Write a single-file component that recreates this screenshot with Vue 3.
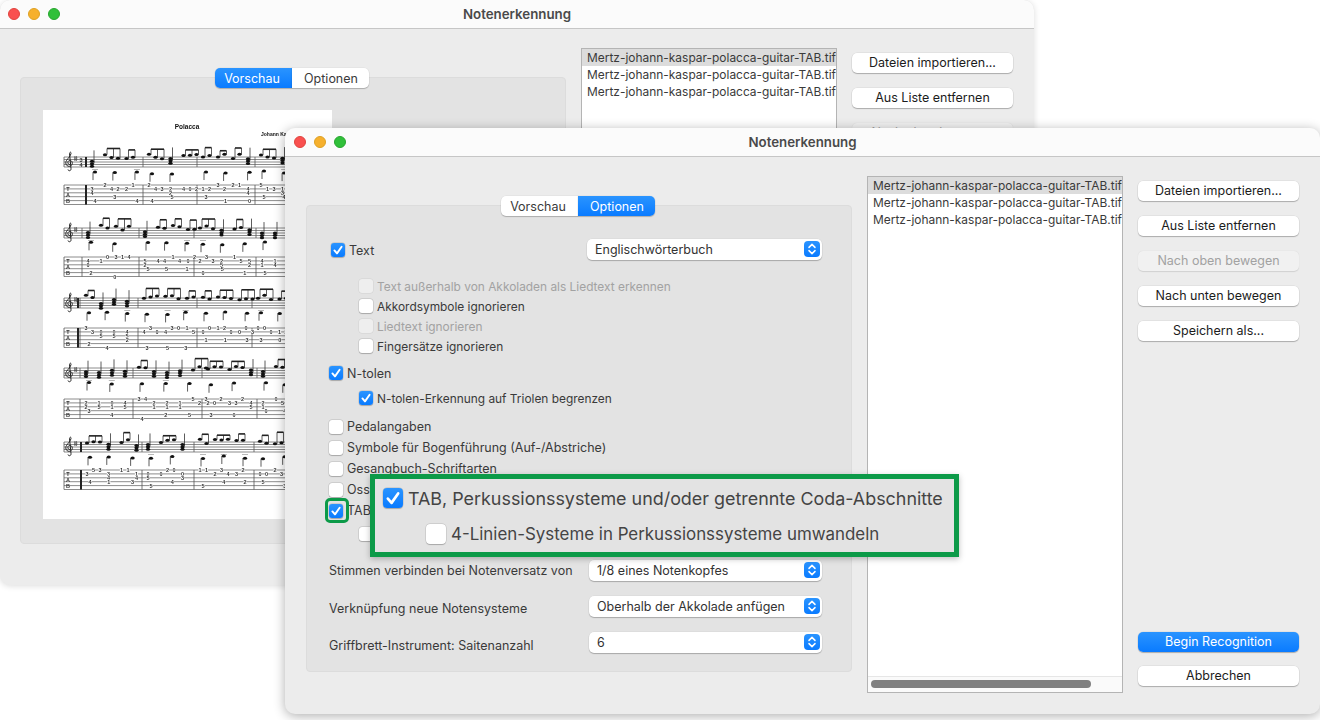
<script setup>
const files = ['Mertz-johann-kaspar-polacca-guitar-TAB.tif', 'Mertz-johann-kaspar-polacca-guitar-TAB.tif', 'Mertz-johann-kaspar-polacca-guitar-TAB.tif']
const buttons = [
  { t: 'Dateien importieren...' },
  { t: 'Aus Liste entfernen' },
  { t: 'Nach oben bewegen', off: true },
  { t: 'Nach unten bewegen' },
  { t: 'Speichern als...' }
]
const backButtons = buttons.slice(0, 3)
const textRows = [
  { t: 'Text außerhalb von Akkoladen als Liedtext erkennen', off: true },
  { t: 'Akkordsymbole ignorieren' },
  { t: 'Liedtext ignorieren', off: true },
  { t: 'Fingersätze ignorieren' }
]
const mainRows = [
  { t: 'Pedalangaben' },
  { t: 'Symbole für Bogenführung (Auf-/Abstriche)' },
  { t: 'Gesangbuch-Schriftarten' },
  { t: 'Ossia-Takte' },
  { t: 'TAB, Perkussionssysteme und/oder getrennte Coda-Abschnitte', on: true }
]

/* sheet music, drawn on the page's own coordinates */
const systems = [
  { staff: 157, tab: 185, bars: [86, 143, 197, 255, 290], thick: 86, sig: true },
  { staff: 228, tab: 257, bars: [82, 139, 194, 256, 290] },
  { staff: 298, tab: 328, bars: [80, 138, 197, 252, 290], thick: 78 },
  { staff: 368, tab: 399, bars: [80, 133, 202, 257, 290] },
  { staff: 442, tab: 470, bars: [81, 142, 194, 254, 290], thick: 81 }
]
let seed = 4711
const rnd = () => (seed = (seed * 16807) % 2147483647) / 2147483647
const music = systems.map((s) => {
  const heads = [], stems = [], beams = [], digits = [], ledgers = []
  const digit = (x, line) => digits.push({ x, y: s.tab + line * 3.9, d: String(Math.floor(rnd() * 6)) })
  for (let m = 0; m < s.bars.length - 1; m++) {
    const end = s.bars[m + 1]
    let x = s.bars[m] + 6
    while (x < end - 5) {
      if (rnd() < 0.3) {
        const y = s.staff + 1 + rnd() * 5
        heads.push({ x, y }, { x, y: y + 2.4 }, { x, y: y + 4.8 })
        stems.push({ x: x + 2, y1: y + 2, y2: y - 11 })
        digit(x, 1); digit(x, 2)
        x += 13
      } else {
        const n = rnd() < 0.5 ? 2 : 3
        const top = s.staff - 6 - rnd() * 4
        for (let i = 0; i < n; i++) {
          const nx = x + i * 6.5
          const y = s.staff + rnd() * 5 - 3
          heads.push({ x: nx, y })
          stems.push({ x: nx + 2, y1: y, y2: top })
          digit(nx, rnd() < 0.5 ? 0 : 1)
        }
        beams.push({ x1: x + 2, x2: x + 2 + (n - 1) * 6.5, y: top })
        x += n * 6.5 + 2
      }
    }
    for (let lx = s.bars[m] + 9; lx < end - 4; lx += 18 + rnd() * 6) {
      const y = s.staff + 14 + rnd() * 3
      heads.push({ x: lx, y })
      stems.push({ x: lx - 2, y1: y, y2: y + 8 })
      if (rnd() < 0.4) ledgers.push({ x1: lx - 3, x2: lx + 3, y: s.staff + 12.5 })
      digit(lx, 3 + Math.floor(rnd() * 2.4))
    }
  }
  return { ...s, heads, stems, beams, digits, ledgers }
})
</script>

<template>
  <div class="desk">
    <!-- back window -->
    <section class="win back">
      <header class="bar">
        <i class="light red"></i><i class="light amber"></i><i class="light green"></i>
        <b class="title">Notenerkennung</b>
      </header>
      <div class="body">
        <div class="panel">
          <div class="tabs">
            <span class="tab sel">Vorschau</span><span class="tab">Optionen</span>
          </div>
          <div class="sheet">
            <svg width="289" height="409" viewBox="43 110 289 409">
              <text x="187" y="129" class="t1" text-anchor="middle">Polacca</text>
              <text x="261" y="136" class="t2">Johann Kaspar Mertz</text>
              <g v-for="(s, si) in music" :key="si">
                <line v-for="n in 5" :key="'a' + n" x1="64" x2="292" :y1="s.staff + (n - 1) * 2.5" :y2="s.staff + (n - 1) * 2.5" class="ln" />
                <line v-for="n in 6" :key="'b' + n" x1="64" x2="292" :y1="s.tab + (n - 1) * 3.9" :y2="s.tab + (n - 1) * 3.9" class="ln" />
                <line x1="64" x2="64" :y1="s.staff" :y2="s.staff + 10" class="bl" />
                <line x1="64" x2="64" :y1="s.tab" :y2="s.tab + 19.5" class="bl" />
                <g v-for="b in s.bars.slice(0, -1)" :key="'c' + b">
                  <line :x1="b" :x2="b" :y1="s.staff" :y2="s.staff + 10" class="bl" />
                  <line :x1="b" :x2="b" :y1="s.tab" :y2="s.tab + 19.5" class="bl" />
                </g>
                <g v-if="s.thick">
                  <line :x1="s.thick" :x2="s.thick" :y1="s.staff" :y2="s.staff + 10" class="thick" />
                  <line :x1="s.thick" :x2="s.thick" :y1="s.tab" :y2="s.tab + 19.5" class="thick" />
                </g>
                <path :d="`M70 ${s.staff + 7.5} c-2.5 0 -3 -3.5 -.5 -4 c3 -.5 4 4 1 5.5 c-3.5 1.5 -6 -2.5 -4 -5.5 c1.5 -2.5 4 -4 4.5 -7 c.2 -1.5 -1 -2 -1.5 0 l1.5 15 c.3 2.5 -2.5 3 -3 1`" class="clef" />
                <path :d="`M74 ${s.staff + 1} h3.4 M74 ${s.staff + 2.6} h3.4 M74.9 ${s.staff - 1} v5 M76.4 ${s.staff - 1} v5`" class="bl" />
                <text v-if="s.sig" x="81" :y="s.staff + 4.6" class="num" text-anchor="middle">3</text>
                <text v-if="s.sig" x="81" :y="s.staff + 10" class="num" text-anchor="middle">4</text>
                <text x="68" :y="s.tab + 6" class="num" text-anchor="middle">T</text>
                <text x="68" :y="s.tab + 12" class="num" text-anchor="middle">A</text>
                <text x="68" :y="s.tab + 18" class="num" text-anchor="middle">B</text>
                <line v-for="(t, i) in s.ledgers" :key="'l' + i" :x1="t.x1" :x2="t.x2" :y1="t.y" :y2="t.y" class="ledger" />
                <line v-for="(t, i) in s.stems" :key="'s' + i" :x1="t.x" :x2="t.x" :y1="t.y1" :y2="t.y2" class="stem" />
                <line v-for="(t, i) in s.beams" :key="'d' + i" :x1="t.x1" :x2="t.x2" :y1="t.y" :y2="t.y" class="beam" />
                <ellipse v-for="(t, i) in s.heads" :key="'h' + i" :cx="t.x" :cy="t.y" rx="2.1" ry="1.5" class="head" />
                <g v-for="(t, i) in s.digits" :key="'g' + i">
                  <rect :x="t.x - 1.6" :y="t.y - 2.2" width="3.2" height="4.4" fill="#fff" />
                  <text :x="t.x" :y="t.y + 2" class="num" text-anchor="middle">{{ t.d }}</text>
                </g>
              </g>
            </svg>
          </div>
        </div>
        <div class="list short">
          <div v-for="(f, i) in files" :key="i" class="file" :class="{ hi: i === 0 }">{{ f }}</div>
        </div>
        <div class="side">
          <button v-for="b in backButtons" :key="b.t" class="btn" :class="{ dim: b.off }">{{ b.t }}</button>
        </div>
      </div>
    </section>

    <!-- front window -->
    <section class="win front">
      <header class="bar">
        <i class="light red"></i><i class="light amber"></i><i class="light green"></i>
        <b class="title">Notenerkennung</b>
      </header>
      <div class="body">
        <div class="panel">
          <div class="tabs">
            <span class="tab">Vorschau</span><span class="tab sel">Optionen</span>
          </div>
          <div class="form">
            <div class="row first">
              <label class="opt shift">
                <span class="box on"><svg viewBox="0 0 14 14"><path d="M3.4 7.4l2.6 3 4.6-6.6" /></svg></span>Text
              </label>
              <div class="select wide">Englischwörterbuch
                <span class="stepper"><svg viewBox="0 0 16 16"><path d="M5 6.4L8 3.4l3 3M5 9.6l3 3 3-3" /></svg></span>
              </div>
            </div>
            <div class="group textgroup">
              <label v-for="r in textRows" :key="r.t" class="opt sub tight" :class="{ off: r.off }">
                <span class="box" :class="{ dis: r.off }"></span>{{ r.t }}
              </label>
            </div>
            <label class="opt tight ntolen">
              <span class="box on"><svg viewBox="0 0 14 14"><path d="M3.4 7.4l2.6 3 4.6-6.6" /></svg></span>N-tolen
            </label>
            <label class="opt sub tight ntsub">
              <span class="box on"><svg viewBox="0 0 14 14"><path d="M3.4 7.4l2.6 3 4.6-6.6" /></svg></span>N-tolen-Erkennung auf Triolen begrenzen
            </label>
            <div class="group maingroup">
              <label v-for="r in mainRows" :key="r.t" class="opt step">
                <span class="box" :class="{ on: r.on }"><svg v-if="r.on" viewBox="0 0 14 14"><path d="M3.4 7.4l2.6 3 4.6-6.6" /></svg></span>{{ r.t }}
              </label>
            </div>
            <label class="opt sub tight tabsub">
              <span class="box"></span>4-Linien-Systeme in Perkussionssysteme umwandeln
            </label>
            <div class="row pick first-pick">
              <span class="caption">Stimmen verbinden bei Notenversatz von</span>
              <div class="select">1/8 eines Notenkopfes
                <span class="stepper"><svg viewBox="0 0 16 16"><path d="M5 6.4L8 3.4l3 3M5 9.6l3 3 3-3" /></svg></span>
              </div>
            </div>
            <div class="row pick">
              <span class="caption low">Verknüpfung neue Notensysteme</span>
              <div class="select">Oberhalb der Akkolade anfügen
                <span class="stepper"><svg viewBox="0 0 16 16"><path d="M5 6.4L8 3.4l3 3M5 9.6l3 3 3-3" /></svg></span>
              </div>
            </div>
            <div class="row pick">
              <span class="caption lower">Griffbrett-Instrument: Saitenanzahl</span>
              <div class="select">6
                <span class="stepper"><svg viewBox="0 0 16 16"><path d="M5 6.4L8 3.4l3 3M5 9.6l3 3 3-3" /></svg></span>
              </div>
            </div>
          </div>
        </div>
        <div class="list">
          <div v-for="(f, i) in files" :key="i" class="file" :class="{ hi: i === 0 }">{{ f }}</div>
          <div class="scroll"><span class="thumb"></span></div>
        </div>
        <div class="side">
          <button v-for="b in buttons" :key="b.t" class="btn" :class="{ dim: b.off }">{{ b.t }}</button>
          <button class="btn primary">Begin Recognition</button>
          <button class="btn">Abbrechen</button>
        </div>
      </div>

      <!-- green call-outs lying over the form -->
      <span class="ring"></span>
      <div class="callout">
        <div class="c-row">
          <span class="box big on"><svg viewBox="0 0 14 14"><path d="M3.4 7.4l2.6 3 4.6-6.6" /></svg></span>
          TAB, Perkussionssysteme und/oder getrennte Coda-Abschnitte
        </div>
        <div class="c-row c-sub">
          <span class="box big"></span>
          4-Linien-Systeme in Perkussionssysteme umwandeln
        </div>
      </div>
    </section>
  </div>
</template>

<style>
html, body { margin: 0; background: #fff; }
</style>

<style scoped>
.desk {
  position: relative;
  width: 1320px;
  height: 720px;
  overflow: hidden;
  background: #fff;
  font-family: Inter, "Liberation Sans", sans-serif;
  font-size: 12.5px;
  color: #3a3a3a;
}
.win {
  position: absolute;
  background: #ececec;
  border-radius: 10px;
}
.back {
  left: 0;
  top: 0;
  width: 1034px;
  height: 585px;
  box-shadow: 0 1px 6px rgba(0, 0, 0, 0.14);
  overflow: hidden;
}
.front {
  left: 285px;
  top: 128px;
  width: 1035px;
  height: 586px;
  box-shadow: 0 2px 12px rgba(0, 0, 0, 0.32);
}
.bar {
  position: relative;
  display: flex;
  align-items: center;
  gap: 8px;
  height: 29px;
  box-sizing: border-box;
  padding: 0 0 1px 9px;
  background: #fbfbfb;
  border-bottom: 1px solid #c6c6c6;
  border-radius: 10px 10px 0 0;
}
.back .bar { padding-left: 8px; }
.light {
  width: 12px;
  height: 12px;
  border-radius: 50%;
  box-sizing: border-box;
}
.red { background: #f9504f; border: 0.5px solid #e0443e; }
.amber { background: #f6b02d; border: 0.5px solid #dea123; }
.green { background: #30c03a; border: 0.5px solid #28a62f; }
.title {
  position: absolute;
  left: 0;
  right: 0;
  top: 6px;
  text-align: center;
  font-size: 13.3px;
  font-weight: 600;
  color: #4a4a4a;
}
.body { display: flex; align-items: flex-start; }
.panel {
  box-sizing: border-box;
  width: 546px;
  height: 467px;
  margin: 48px 0 0 21px;
  background: #e3e3e3;
  border: 1px solid #dcdcdc;
  border-radius: 4px;
}
.back .panel { margin-left: 20px; }
.tabs {
  display: flex;
  justify-content: center;
  margin: -10px 3px 0 0;
}
.tab {
  box-sizing: border-box;
  width: 77px;
  height: 20px;
  line-height: 21px;
  text-align: center;
  background: #fff;
  color: #3a3a3a;
  box-shadow: 0 1px 1px rgba(0, 0, 0, 0.22), 0 0 0 0.5px rgba(0, 0, 0, 0.06);
}
.tab:first-child { border-radius: 5px 0 0 5px; padding-right: 2px; }
.tab:last-child { border-radius: 0 5px 5px 0; padding-left: 2px; }
.tab.sel {
  color: #fff;
  background: linear-gradient(#2a94ff, #0a7bff);
}
.sheet {
  width: 289px;
  height: 409px;
  margin: 22px 0 0 22px;
  background: #fff;
  overflow: hidden;
}
.sheet svg { display: block; filter: blur(0.35px); }
.t1 { font: bold 6.5px "Liberation Sans", sans-serif; fill: #111; }
.t2 { font: bold 5px "Liberation Sans", sans-serif; fill: #111; }
.num { font: bold 5.5px "Liberation Sans", sans-serif; fill: #333; }
.ln { stroke: #6e6e6e; stroke-width: 0.8; }
.ledger { stroke: #999; stroke-width: 0.7; }
.bl { stroke: #555; stroke-width: 0.8; fill: none; }
.thick { stroke: #222; stroke-width: 2; }
.clef { stroke: #222; stroke-width: 1; fill: none; }
.stem { stroke: #333; stroke-width: 0.8; }
.beam { stroke: #222; stroke-width: 1.6; }
.head { fill: #111; }

/* form */
.form { padding-left: 22px; }
.row { display: flex; align-items: flex-start; }
.first { margin-top: 23px; justify-content: space-between; padding-right: 29px; height: 21px; }
.opt { display: flex; align-items: center; gap: 4px; white-space: nowrap; }
.shift { margin-left: 2px; margin-top: 1px; height: 20px; }
.tight { height: 20px; }
.step { height: 21px; }
.sub { margin-left: 30px; font-size: 11.9px; }
.off { color: #a2a2a2; }
.textgroup { margin-top: 16px; }
.ntolen { margin-top: 7px; }
.ntsub { margin-top: 5px; }
.maingroup { margin-top: 8px; }
.tabsub { margin-top: 3px; }
.first-pick { margin-top: 16px; }
.pick { justify-content: space-between; padding-right: 29px; height: 21px; }
.pick + .pick { margin-top: 15px; }
.caption { line-height: 20px; padding-top: 1px; }
.caption.low { padding-top: 3px; }
.caption.lower { padding-top: 4px; }

.box {
  flex: none;
  display: block;
  box-sizing: border-box;
  width: 14px;
  height: 14px;
  background: #fff;
  border-radius: 3px;
  box-shadow: 0 0 0 0.5px rgba(0, 0, 0, 0.14), 0 0.5px 1px rgba(0, 0, 0, 0.2);
}
.box svg { display: block; width: 100%; height: 100%; }
.box path { fill: none; stroke: #fff; stroke-width: 1.9; stroke-linecap: round; stroke-linejoin: round; }
.box.on { background: linear-gradient(#2a94ff, #0a7bff); }
.box.dis { background: #eeeeee; box-shadow: 0 0 0 0.5px rgba(0, 0, 0, 0.08); }

.select {
  position: relative;
  box-sizing: border-box;
  width: 233px;
  height: 21px;
  line-height: 21px;
  padding-left: 8px;
  background: #fff;
  border-radius: 5px;
  color: #333;
  box-shadow: 0 1px 1px rgba(0, 0, 0, 0.24), 0 0 0 0.5px rgba(0, 0, 0, 0.05);
}
.wide { width: 235px; }
.stepper {
  position: absolute;
  right: 2px;
  top: 2px;
  width: 16px;
  height: 16px;
  background: linear-gradient(#2a94ff, #0a7bff);
  border-radius: 4px;
}
.stepper svg { display: block; }
.stepper path { fill: none; stroke: #fff; stroke-width: 1.5; stroke-linecap: round; stroke-linejoin: round; }

/* list */
.list {
  position: relative;
  box-sizing: border-box;
  flex: none;
  width: 256px;
  height: 517px;
  margin: 19px 0 0 15px;
  background: #fff;
  border: 1px solid #b4b4b4;
  overflow: hidden;
  font-size: 11.95px;
}
.short { height: 460px; }
.file {
  height: 17px;
  line-height: 18px;
  padding-left: 5px;
  white-space: nowrap;
  color: #3a3a3a;
}
.hi { background: #dcdcdc; }
.scroll {
  position: absolute;
  left: 0;
  right: 0;
  bottom: 0;
  height: 15px;
  background: #fafafa;
  border-top: 1px solid #e6e6e6;
}
.thumb {
  display: block;
  width: 220px;
  height: 8px;
  margin: 3px 0 0 3px;
  background: #808080;
  border-radius: 4px;
}

/* buttons */
.side {
  flex: none;
  display: flex;
  flex-direction: column;
  width: 161px;
  margin: 24px 0 0 15px;
}
.btn {
  display: block;
  width: 161px;
  height: 20px;
  margin: 0 0 15px;
  padding: 0 0 2px;
  border: 0;
  border-radius: 5px;
  background: #fff;
  font: inherit;
  color: #1c1c1c;
  box-shadow: 0 1px 1px rgba(0, 0, 0, 0.24), 0 0 0 0.5px rgba(0, 0, 0, 0.08);
}
.dim { background: #f1f1f1; color: #a2a2a2; box-shadow: 0 0.5px 1px rgba(0, 0, 0, 0.12); }
.primary {
  margin-top: 276px;
  margin-bottom: 14px;
  color: #fff;
  background: linear-gradient(#2a94ff, #0a7bff);
}

/* call-outs */
.ring {
  position: absolute;
  left: 40px;
  top: 370px;
  width: 24px;
  height: 25px;
  box-sizing: border-box;
  border: 3px solid #0c9a48;
  border-radius: 5px;
}
.callout {
  position: absolute;
  left: 85px;
  top: 346px;
  box-sizing: border-box;
  width: 589px;
  height: 83px;
  padding: 9px 0 0 8px;
  background: #e3e3e3;
  border: 5px solid #0c9a48;
  box-shadow: 0 2px 6px rgba(0, 0, 0, 0.25);
  font-size: 17.9px;
  color: #444;
}
.c-row { display: flex; align-items: center; gap: 5px; height: 20px; white-space: nowrap; }
.c-sub { margin: 16px 0 0 43px; gap: 5px; font-size: 16.9px; }
.big { width: 20px; height: 20px; border-radius: 4px; }
</style>
